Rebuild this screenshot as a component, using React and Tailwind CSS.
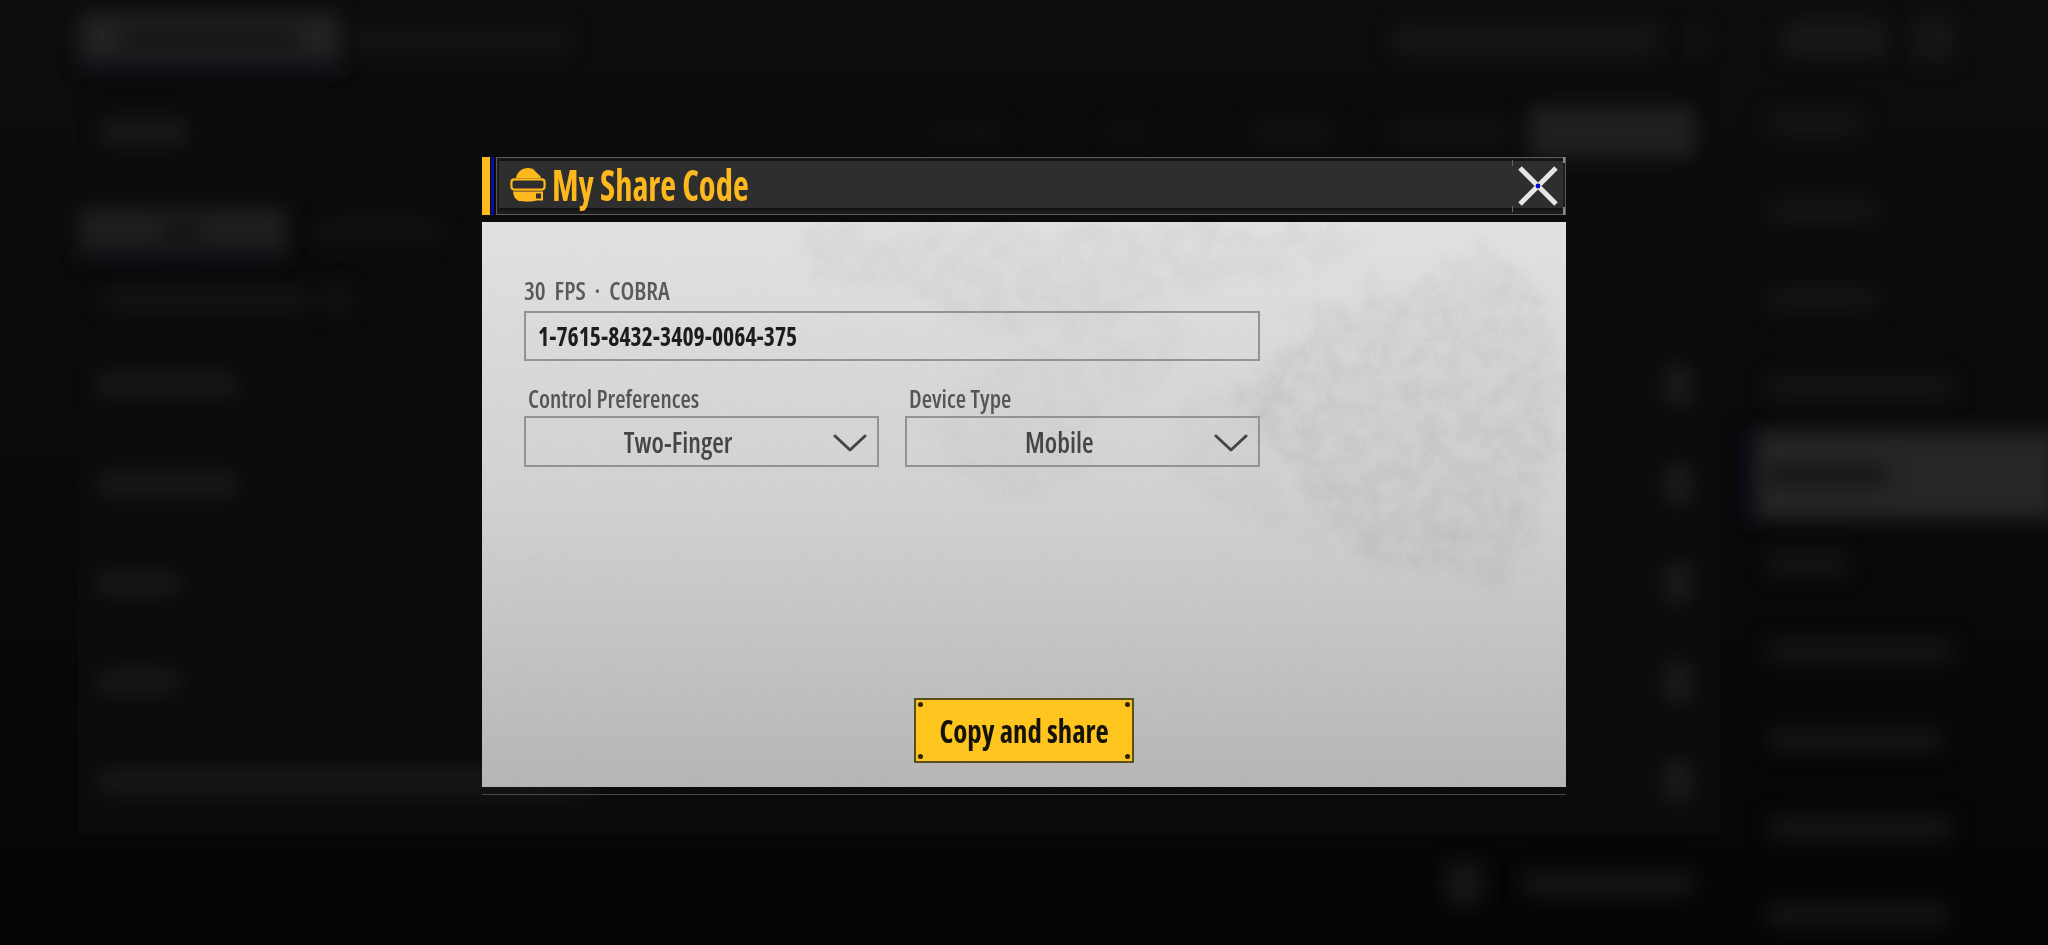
function Blob({ className }) {
  return <div className={"blur-[10px] " + className} />;
}

function Chevron() {
  return (
    <svg width="34" height="18" viewBox="0 0 34 18" className="absolute right-[10px] top-[16px]" fill="none">
      <path d="M2 2 L17 16 L32 2" stroke="#454545" strokeWidth="3" strokeLinecap="round" strokeLinejoin="round" />
    </svg>
  );
}

function Helmet() {
  return (
    <svg width="36" height="36" viewBox="0 0 36 36" fill="none">
      <path d="M6 11 C7 5 12 1 18 1 C24 1 29 5 31 11 Z" fill="#fdb81e" />
      <path d="M24 2 L30 8" stroke="#2e2e2e" strokeWidth="1.4" />
      <rect x="1.4" y="12.4" width="33.2" height="10.2" rx="3" stroke="#fdb81e" strokeWidth="2.2" />
      <path d="M3 24.5 H33 V33.5 H26 C24 35 10 35 8 33.5 C5 32 3.5 29 3 24.5 Z" fill="#fdb81e" />
      <rect x="26" y="26.5" width="5" height="5" fill="#2e2e2e" />
    </svg>
  );
}

function Select({ label, value }) {
  return (
    <div className="flex flex-col">
      <div className="h-[26px] pl-[4px] text-[25px] leading-[26px] font-semibold text-[#565656]">
        <span className="inline-block origin-left scale-x-[0.95] whitespace-nowrap">{label}</span>
      </div>
      <div className="relative mt-[5px] flex h-[51px] items-center justify-center border-2 border-[#939393] pr-[46px] text-[29px] font-semibold text-[#454545]">
        <span className="inline-block scale-x-[0.92] whitespace-nowrap">{value}</span>
        <Chevron />
      </div>
    </div>
  );
}

function Rivet({ className }) {
  return <span className={"absolute size-[5px] rounded-full bg-[#2a2208] " + className} />;
}

function Row({ width }) {
  return (
    <div className="flex h-[99px] shrink-0 items-center justify-between pl-[16px] pr-[26px]">
      <Blob className={"h-[28px] rounded-full bg-[#171717] " + width} />
      <Blob className="h-[46px] w-[32px] rounded-full bg-[#1a1a1a]" />
    </div>
  );
}

function SideItem({ width }) {
  return (
    <div className="flex h-[88px] shrink-0 items-center pl-[45px]">
      <Blob className={"h-[26px] rounded-full bg-[#141412] " + width} />
    </div>
  );
}

function Backdrop() {
  return (
    <div className="flex h-full flex-col">
      <header className="flex h-[78px] shrink-0 items-center pl-[80px] pr-[94px]">
        <div className="relative h-[50px] w-[260px]">
          <Blob className="absolute inset-0 bg-[#232323]" />
          <Blob className="absolute left-[40px] right-[40px] top-[16px] h-[18px] bg-[#131313]" />
          <Blob className="absolute inset-x-0 -bottom-[6px] h-[6px] bg-[#0e0e22]" />
        </div>
        <Blob className="ml-[12px] h-[27px] w-[219px] rounded-full bg-[#141414]" />
        <div className="flex-1" />
        <Blob className="h-[30px] w-[272px] rounded-full bg-[#161616]" />
        <Blob className="ml-[26px] h-[26px] w-[18px] rounded-full bg-[#161616]" />
        <Blob className="ml-[75px] h-[36px] w-[105px] rounded-lg bg-[#181818]" />
        <Blob className="ml-[26px] h-[44px] w-[41px] bg-[#161616]" />
      </header>
      <div className="flex min-h-0 flex-1">
        <div className="flex w-[1720px] shrink-0 flex-col">
          <section className="ml-[78px] flex h-[755px] shrink-0 flex-col bg-[#0b0b0b]">
            <div className="flex h-[108px] shrink-0 items-center pl-[22px] pr-[25px]">
              <Blob className="h-[28px] w-[87px] rounded-lg bg-[#191919]" />
              <div className="flex-1" />
              <Blob className="h-[22px] w-[76px] rounded-full bg-[#101010]" />
              <Blob className="ml-[103px] h-[22px] w-[38px] rounded-full bg-[#101010]" />
              <Blob className="ml-[102px] h-[22px] w-[90px] rounded-full bg-[#121210]" />
              <Blob className="ml-[50px] h-[22px] w-[127px] rounded-full bg-[#121210]" />
              <Blob className="ml-[15px] h-[52px] w-[166px] rounded-md bg-[#202020]" />
            </div>
            <div className="mt-[22px] flex h-[47px] shrink-0 items-center pl-[2px]">
              <div className="relative h-[47px] w-[206px]">
                <Blob className="absolute inset-0 bg-[#1f1f1f]" />
                <Blob className="absolute left-[85px] top-[14px] h-[20px] w-[34px] bg-[#111111]" />
                <Blob className="absolute inset-x-0 -bottom-[5px] h-[6px] bg-[#0d0d1e]" />
              </div>
              <Blob className="ml-[31px] h-[23px] w-[125px] rounded-full bg-[#131313]" />
            </div>
            <div className="mt-[35px] flex h-[20px] shrink-0 items-center pl-[22px]">
              <Blob className="h-[20px] w-[220px] rounded-full bg-[#141414]" />
              <Blob className="ml-[2px] h-[30px] w-[30px] rounded-full bg-[#131313]" />
            </div>
            <div className="mt-[25px] flex flex-col">
              <Row width="w-[146px]" />
              <Row width="w-[146px]" />
              <Row width="w-[88px]" />
              <Row width="w-[88px]" />
              <Row width="w-[500px]" />
            </div>
          </section>
          <div className="flex flex-1 items-center justify-end pb-[12px] pr-[24px]">
            <Blob className="h-[48px] w-[40px] rounded-full bg-[#161614]" />
            <Blob className="ml-[36px] h-[26px] w-[176px] rounded-full bg-[#151515]" />
          </div>
        </div>
        <aside className="flex flex-1 flex-col pt-[1px]">
          <SideItem width="w-[100px]" />
          <SideItem width="w-[115px]" />
          <SideItem width="w-[115px]" />
          <SideItem width="w-[190px]" />
          <div className="relative flex h-[88px] shrink-0 items-center pl-[45px]">
            <Blob className="absolute inset-y-0 left-[25px] w-[12px] bg-[#0a0a24]" />
            <Blob className="absolute inset-y-0 left-[36px] -right-[10px] bg-[#262626]" />
            <Blob className="relative h-[22px] w-[125px] rounded-full bg-[#171717]" />
          </div>
          <SideItem width="w-[85px]" />
          <SideItem width="w-[190px]" />
          <SideItem width="w-[180px]" />
          <SideItem width="w-[190px]" />
          <SideItem width="w-[185px]" />
        </aside>
      </div>
    </div>
  );
}

function PanelTexture() {
  return (
    <svg className="pointer-events-none absolute inset-0 size-full" viewBox="0 0 1084 565" preserveAspectRatio="none">
      <defs>
        <filter id="rough" x="-10%" y="-10%" width="120%" height="120%">
          <feTurbulence type="fractalNoise" baseFrequency="0.03" numOctaves="4" seed="7" result="warp" />
          <feDisplacementMap in="SourceGraphic" in2="warp" scale="60" result="shape" />
          <feGaussianBlur in="shape" stdDeviation="6" result="soft" />
          <feTurbulence type="fractalNoise" baseFrequency="0.05" numOctaves="4" seed="11" />
          <feColorMatrix values="0 0 0 0 0  0 0 0 0 0  0 0 0 0 0  0 0 0 1.2 0" result="mottle" />
          <feComposite in="soft" in2="mottle" operator="in" />
        </filter>
        <filter id="grain" x="0" y="0" width="100%" height="100%">
          <feTurbulence type="fractalNoise" baseFrequency="0.7" numOctaves="2" seed="3" />
          <feColorMatrix values="0 0 0 0 0  0 0 0 0 0  0 0 0 0 0  0 0 0 0.9 -0.38" />
        </filter>
      </defs>
      <g filter="url(#rough)" fill="#000000">
        <path d="M310 0 H900 L850 40 L700 70 L610 110 L480 100 L420 70 L330 60 Z" opacity="0.035" />
        <path d="M440 200 L500 150 L620 110 L700 90 L690 150 L620 190 L600 260 L520 280 L470 250 Z" opacity="0.025" />
        <path d="M810 110 L920 60 L1010 30 L1060 70 L1075 180 L1060 290 L1010 360 L900 350 L840 300 L800 240 L760 190 Z" opacity="0.06" />
        <path d="M690 190 L770 150 L830 120 L780 230 L840 320 L760 300 L700 260 Z" opacity="0.025" />
      </g>
      <rect width="1084" height="565" filter="url(#grain)" opacity="0.08" />
    </svg>
  );
}

function Modal() {
  return (
    <div className="absolute left-[482px] top-[157px] flex w-[1084px] flex-col font-['Open_Sans'] [font-stretch:75%]">
      <div className="flex h-[58px] items-stretch">
        <div className="w-[8px] bg-[#fdbb1c]" />
        <div className="ml-[1px] w-[3px] bg-[#0a0aa0]" />
        <div className="relative ml-[2px] flex flex-1 flex-col border border-[#5a5a5a] bg-[#1c1c1c] pb-[3px] pl-[2px] pr-[2px] pt-[1px]">
          <div className="flex h-[51px] items-center border-y-2 border-[#121212] bg-[#2e2e2e] pl-[11px]">
            <Helmet />
            <h1 className="ml-[6px] whitespace-nowrap text-[42px] leading-none font-bold text-[#fdb81e]">
              <span className="inline-block origin-left scale-x-[0.82]">My Share Code</span>
            </h1>
          </div>
          <button className="absolute right-[5px] top-[6px] size-[44px]">
            <svg width="44" height="44" viewBox="0 0 44 44" fill="none">
              <path d="M4 4 L40 40 M40 4 L4 40" stroke="#e6e6e6" strokeWidth="5" />
              <circle cx="22" cy="22" r="2.4" fill="#0000d8" />
            </svg>
          </button>
          <span className="absolute right-[52px] top-[2px] h-[6px] w-px bg-[#666]" />
          <span className="absolute bottom-[2px] right-[52px] h-[6px] w-px bg-[#666]" />
          <span className="absolute -top-px right-0 h-[6px] w-[2px] bg-[#8a8a8a]" />
          <span className="absolute -bottom-px right-0 h-[8px] w-[2px] bg-[#8a8a8a]" />
        </div>
      </div>
      <div className="relative mt-[7px] flex h-[565px] flex-col bg-gradient-to-b from-[#e2e2e2] via-[#d2d2d2] to-[#b7b7b7] px-[42px] pt-[55px]">
        <PanelTexture />
        <div className="relative flex w-[736px] flex-col">
          <div className="h-[26px] text-[25px] leading-[26px] font-semibold text-[#5a5a5a]">
            <span className="inline-block origin-left scale-x-[0.97] whitespace-pre">30  FPS  ·  COBRA</span>
          </div>
          <div className="mt-[8px] flex h-[50px] items-center border-2 border-[#939393] pl-[12px] text-[27px] font-bold text-[#1c1c1c]">
            <span className="inline-block origin-left scale-x-[0.88] whitespace-nowrap">1-7615-8432-3409-0064-375</span>
          </div>
          <div className="mt-[24px] grid grid-cols-2 gap-[26px]">
            <Select label="Control Preferences" value="Two-Finger" />
            <Select label="Device Type" value="Mobile" />
          </div>
        </div>
        <button className="relative mb-[24px] mt-auto flex h-[65px] w-[220px] items-center justify-center self-center border-2 border-[#5c4d1e] bg-[#fec51f] text-[32px] font-bold text-[#15120a]">
          <Rivet className="left-[2px] top-[2px]" />
          <Rivet className="right-[2px] top-[2px]" />
          <Rivet className="bottom-[2px] left-[2px]" />
          <Rivet className="bottom-[2px] right-[2px]" />
          <span className="inline-block scale-x-[0.9] whitespace-nowrap">Copy and share</span>
        </button>
      </div>
      <div className="mt-[7px] h-px bg-[#474747]" />
    </div>
  );
}

export default function App() {
  return (
    <div className="relative h-[945px] w-full overflow-hidden bg-gradient-to-b from-[#0d0d0d] via-[#0a0a0a] to-[#050505]">
      <Backdrop />
      <Modal />
    </div>
  );
}
